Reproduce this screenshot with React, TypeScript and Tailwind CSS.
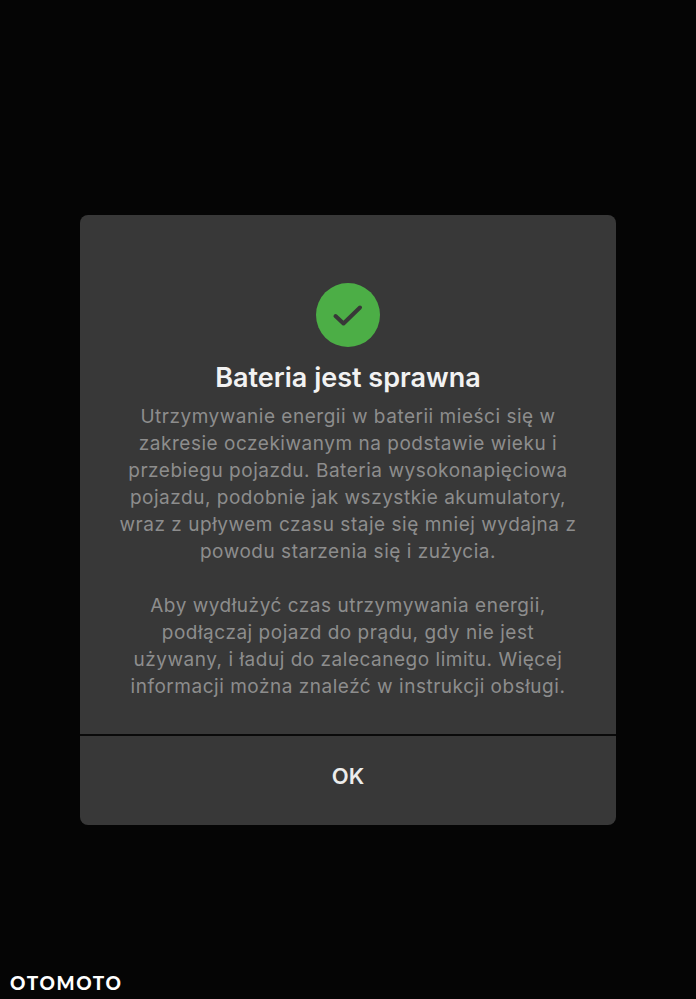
export default function App() {
  return (
    <main className="relative h-[999px] w-full flex flex-col items-center bg-[#050505] pt-[215px] font-['Inter',sans-serif]">
      <section className="w-[536px] h-[610px] flex flex-col rounded-[8px] bg-[#383838]">
        <div className="flex flex-col items-center pt-[68px]">
          <div className="w-[64px] h-[64px] rounded-full bg-[#4cae46] flex items-center justify-center">
            <svg width="32" height="24" viewBox="0 0 32 24" fill="none">
              <path d="M3.5 13L11.5 20.5L28 4.5" stroke="#383838" strokeWidth="4" strokeLinecap="round" strokeLinejoin="round" />
            </svg>
          </div>
          <h1 className="mt-[13px] text-[27px] leading-[36px] font-semibold text-[#f2f2f2]">Bateria jest sprawna</h1>
          <div className="mt-[7px] text-center text-[19px] leading-[27px] tracking-[0.52px] text-[#8d8d8d]">
            <p>Utrzymywanie energii w baterii mieści się w</p>
            <p>zakresie oczekiwanym na podstawie wieku i</p>
            <p>przebiegu pojazdu. Bateria wysokonapięciowa</p>
            <p>pojazdu, podobnie jak wszystkie akumulatory,</p>
            <p>wraz z upływem czasu staje się mniej wydajna z</p>
            <p>powodu starzenia się i zużycia.</p>
            <p className="mt-[27px]">Aby wydłużyć czas utrzymywania energii,</p>
            <p>podłączaj pojazd do prądu, gdy nie jest</p>
            <p>używany, i ładuj do zalecanego limitu. Więcej</p>
            <p>informacji można znaleźć w instrukcji obsługi.</p>
          </div>
        </div>
        <div className="mt-auto h-[91px] pb-[8px] border-t-2 border-[#0a0a0a] flex items-center justify-center">
          <button className="text-[22px] font-semibold text-[#ececec]">OK</button>
        </div>
      </section>
      <div className="absolute left-[10px] top-[971px] text-[19px] leading-[24px] font-black tracking-[1.65px] text-white font-['Lato',sans-serif]">OTOMOTO</div>
    </main>
  );
}
